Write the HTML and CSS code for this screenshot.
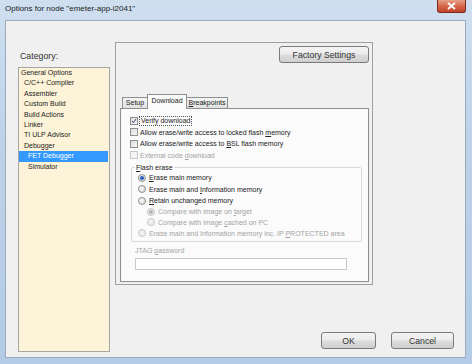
FILE: index.html
```html
<!DOCTYPE html>
<html lang="en">
<head>
    <meta charset="UTF-8">
    <title>Options for node</title>
    <link rel="stylesheet" href="styles.css">
</head>
<body>
<div class="window">
    <div class="titlebar">
        <span class="title">Options for node "emeter-app-i2041"</span>
        <span class="close">
            <svg width="9" height="8" viewBox="0 0 9 8"><path d="M1 1 L8 7 M8 1 L1 7" stroke="#fff" stroke-width="1.8"/></svg>
        </span>
    </div>
    <div class="client">
        <div class="category">
            <div class="cat-label">Category:</div>
            <ul class="cat-list">
                <li class="lvl0">General Options</li>
                <li class="lvl1">C/C++ Compiler</li>
                <li class="lvl1">Assembler</li>
                <li class="lvl1">Custom Build</li>
                <li class="lvl1">Build Actions</li>
                <li class="lvl1">Linker</li>
                <li class="lvl1">TI ULP Advisor</li>
                <li class="lvl1">Debugger</li>
                <li class="lvl2 selected">FET Debugger</li>
                <li class="lvl2">Simulator</li>
            </ul>
        </div>
        <div class="main">
            <div class="options">
                <div class="factory-row">
                    <button class="btn factory">Factory Settings</button>
                </div>
                <div class="tabs">
                    <div class="tab tab-setup">Setup</div>
                    <div class="tab tab-download active">Download</div>
                    <div class="tab tab-break"><u>B</u>reakpoints</div>
                </div>
                <div class="panel">
                    <div class="check">
                        <span class="box"><svg width="8" height="8" viewBox="0 0 8 8"><path d="M1.3 4 L3.2 6.2 L6.8 1.3" fill="none" stroke="#2d3e64" stroke-width="1.3"/></svg></span>
                        <span class="focus">Verify download</span>
                    </div>
                    <div class="check">
                        <span class="box"></span>
                        <span>Allow erase/write access to locked flash <u>m</u>emory</span>
                    </div>
                    <div class="check">
                        <span class="box"></span>
                        <span>Allow erase/write access to <u>B</u>SL flash memory</span>
                    </div>
                    <div class="check disabled">
                        <span class="box"></span>
                        <span>External code <u>d</u>ownload</span>
                    </div>

                    <fieldset class="group">
                        <legend><u>F</u>lash erase</legend>
                        <div class="radio">
                            <span class="dot on"></span>
                            <span><u>E</u>rase main memory</span>
                        </div>
                        <div class="radio">
                            <span class="dot"></span>
                            <span>Erase main and <u>I</u>nformation memory</span>
                        </div>
                        <div class="radio">
                            <span class="dot"></span>
                            <span><u>R</u>etain unchanged memory</span>
                        </div>
                        <div class="radio sub disabled">
                            <span class="dot on"></span>
                            <span>Compare with image on <u>t</u>arget</span>
                        </div>
                        <div class="radio sub disabled">
                            <span class="dot"></span>
                            <span>Compare with image <u>c</u>ached on PC</span>
                        </div>
                        <div class="radio disabled">
                            <span class="dot"></span>
                            <span>Erase main and Information memory inc. IP <u>P</u>ROTECTED area</span>
                        </div>
                    </fieldset>

                    <div class="jtag-label">JTAG <u>p</u>assword</div>
                    <div class="jtag-input"></div>
                </div>
            </div>
            <div class="buttons">
                <button class="btn ok">OK</button>
                <button class="btn cancel">Cancel</button>
            </div>
        </div>
    </div>
</div>
</body>
</html>
```

FILE: styles.css
```css
* {
    box-sizing: border-box;
}

body {
    margin: 0;
    font-family: "Liberation Sans", Arial, sans-serif;
    color: #222;
}

.window {
    width: 472px;
    height: 364px;
    display: flex;
    flex-direction: column;
    background: linear-gradient(180deg, #cfdff0 0%, #bcd2e9 40%, #b3cbe4 100%);
}

/* title bar */
.titlebar {
    height: 20px;
    display: flex;
    justify-content: space-between;
    align-items: flex-start;
    padding-left: 5px;
    padding-right: 6px;
}

.title {
    font-size: 8px;
    line-height: 10px;
    padding-top: 4px;
    color: #1a1a1a;
}

.close {
    width: 29px;
    height: 13px;
    display: flex;
    align-items: center;
    justify-content: center;
    background: linear-gradient(180deg, #e8a08a 0%, #d5674a 50%, #c2442a 100%);
    border: 1px solid #7a2c1c;
    border-top: none;
    border-radius: 0 0 3px 3px;
}

/* client area */
.client {
    flex: 1;
    margin: 0 6px 6px 5px;
    background: #f0f0f0;
    border: 1px solid #9aabbd;
    display: flex;
}

.category {
    margin-left: 12px;
    padding-top: 29px;
    width: 92px;
}

.cat-label {
    font-size: 8.8px;
    line-height: 12px;
    padding-left: 2px;
    color: #333;
}

.cat-list {
    list-style: none;
    margin: 5px 0 0;
    padding: 0;
    height: 285px;
    background: #fdf3d8;
    border: 1px solid #a6a6a6;
}

.cat-list li {
    font-size: 7px;
    height: 10.4px;
    line-height: 10.4px;
    white-space: nowrap;
    color: #222;
}

.lvl0 { padding-left: 2px; }
.lvl1 { padding-left: 5px; }
.lvl2 { padding-left: 9px; }

.cat-list li.selected {
    background: #3399ff;
    color: #fff;
    margin-right: 1px;
}

/* right side */
.main {
    flex: 1;
    margin-left: 5px;
    padding-top: 21px;
    padding-right: 11px;
    display: flex;
    flex-direction: column;
}

.options {
    width: 258px;
    border: 1px solid #a0a0a0;
    padding: 3px 3px 2px 4px;
}

.factory-row {
    display: flex;
    justify-content: flex-end;
}

.btn {
    font-family: "Liberation Sans", Arial, sans-serif;
    font-size: 8.7px;
    height: 17px;
    padding: 0;
    color: #333;
    border: 1px solid #7a7a7a;
    border-radius: 3px;
    background: linear-gradient(180deg, #f4f4f4 0%, #ebebeb 48%, #dddddd 52%, #cfcfcf 100%);
}

.factory {
    width: 90px;
}

/* tabs */
.tabs {
    display: flex;
    align-items: flex-end;
    margin-top: 31px;
    padding-left: 2px;
    height: 14px;
}

.tab {
    font-size: 7px;
    height: 11px;
    line-height: 10px;
    text-align: center;
    border: 1px solid #8e8f8f;
    border-bottom: none;
    background: linear-gradient(180deg, #f5f5f5, #e1e1e1);
    color: #222;
}

.tab-setup { width: 26px; }
.tab-download { width: 40px; }
.tab-break { width: 42px; }

.tab.active {
    height: 15px;
    line-height: 11px;
    background: #fbfbfb;
    margin-bottom: -1px;
    position: relative;
    z-index: 1;
    margin-left: -1px;
    margin-right: -1px;
}

.panel {
    height: 174px;
    background: #fbfbfb;
    border: 1px solid #8e8f8f;
    padding: 6px 6px 0 9px;
    font-size: 7px;
}

.check {
    height: 11.5px;
    display: flex;
    align-items: center;
    white-space: nowrap;
}

.box {
    width: 8px;
    height: 8px;
    margin-right: 2px;
    border: 1px solid #8e8f8f;
    background: linear-gradient(135deg, #dcdcdc, #fafafa);
    display: flex;
    align-items: center;
    justify-content: center;
}

.box svg {
    display: block;
}

.focus {
    border: 1px dotted #555;
    padding: 0 1px;
    line-height: 8px;
    margin-left: -1px;
}

.disabled {
    color: #a3a3a3;
}

.check.disabled .box {
    border-color: #c8c8c8;
    background: #f4f4f4;
}

/* flash erase group */
.group {
    margin: 2px 0 0 1px;
    padding: 0 0 2.5px 6px;
    border: 1px solid #d5dadf;
    border-radius: 2px;
    min-width: 0;
    height: 79px;
}

.group legend {
    padding: 0 1px;
    margin-left: -3px;
    font-size: 7px;
    line-height: 9px;
}

.radio {
    height: 11.5px;
    display: flex;
    align-items: center;
    white-space: nowrap;
}

.radio.sub {
    height: 10.5px;
    padding-left: 9px;
}

.dot {
    width: 8px;
    height: 8px;
    margin-right: 3px;
    border-radius: 50%;
    border: 1px solid #8e8f8f;
    background: radial-gradient(circle at 35% 35%, #fafafa, #d4d4d4);
    display: flex;
    align-items: center;
    justify-content: center;
}

.dot.on::after {
    content: "";
    width: 4px;
    height: 4px;
    border-radius: 50%;
    background: #2a5fb8;
}

.radio.disabled .dot {
    border-color: #c4c4c4;
    background: #f0f0f0;
}

.radio.disabled .dot.on::after {
    background: #b4b4b4;
}

.jtag-label {
    margin-top: 3.5px;
    line-height: 9px;
    padding-left: 5px;
    color: #a3a3a3;
}

.jtag-input {
    margin: 3.5px 0 0 5px;
    width: 212px;
    height: 12px;
    background: #fff;
    border: 1px solid #c8c8c8;
}

/* dialog buttons */
.buttons {
    display: flex;
    justify-content: flex-end;
    gap: 15px;
    margin-top: 47px;
}

.ok { width: 55px; }
.cancel { width: 63px; }
```
